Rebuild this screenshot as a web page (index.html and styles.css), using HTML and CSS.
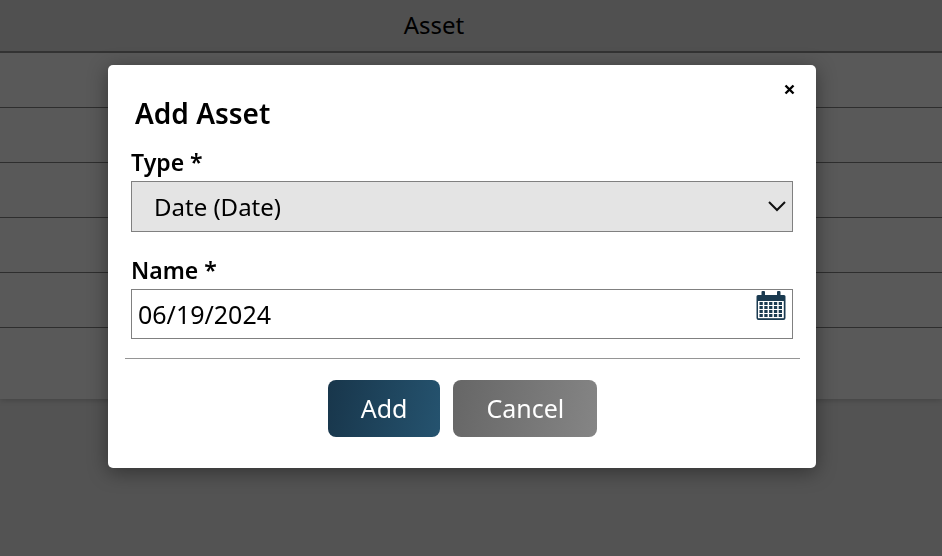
FILE: index.html
```html
<!doctype html>
<html lang="en">
<head>
    <meta charset="utf-8">
    <meta name="viewport" content="width=device-width, initial-scale=1">
    <title>Add Asset</title>
    <link rel="stylesheet" href="styles.css">
</head>
<body>
    <table class="asset-table">
        <thead>
            <tr><th>Asset</th></tr>
        </thead>
        <tbody>
            <tr><td></td></tr>
            <tr><td></td></tr>
            <tr><td></td></tr>
            <tr><td></td></tr>
            <tr><td></td></tr>
            <tr class="last-row"><td></td></tr>
        </tbody>
    </table>

    <div class="overlay">
        <form class="modal" role="dialog" aria-labelledby="modal-title">
            <button type="button" class="close" aria-label="Close">
                <svg width="11" height="11" viewBox="0 0 11 11"><path d="M1.5 1.5l8 8M9.5 1.5l-8 8" stroke="#000" stroke-width="2.4" fill="none"/></svg>
            </button>
            <h2 id="modal-title">Add Asset</h2>

            <div class="field">
                <label for="type">Type *</label>
                <div class="control">
                    <select id="type">
                        <option>Date (Date)</option>
                    </select>
                    <svg class="chevron" width="18" height="11" viewBox="0 0 18 11"><path d="M1 1l8 8 8-8" stroke="#111" stroke-width="2" fill="none"/></svg>
                </div>
            </div>

            <div class="field">
                <label for="name">Name *</label>
                <div class="control">
                    <input id="name" type="text" value="06/19/2024">
                    <button type="button" class="calendar" aria-label="Pick a date">
                        <svg width="30" height="30" viewBox="0 0 30 30">
                            <path fill="#1a3a50" d="M5.500 1q0-1 1-1H8q1 0 1 1v3h12V1q0-1 1-1h1.500q1 0 1 1v3H28q1.500 0 1.500 1.500V27q0 2-2 2h-25q-2 0-2-2V5.500Q.5 4 2 4h3.500z"/>
                            <path fill="#fff" d="M2 10h25.800v17.200H2z"/>
                            <path stroke="#1a3a50" stroke-width="3" stroke-dasharray="3.3 1.500" d="M3.500 12.500H26M3.500 16.500H26M3.500 20.500H26M3.500 24.500H26"/>
                        </svg>
                    </button>
                </div>
            </div>

            <div class="actions">
                <button type="submit" class="btn btn-add">Add</button>
                <button type="button" class="btn btn-cancel">Cancel</button>
            </div>
        </form>
    </div>
</body>
</html>
```
FILE: styles.css
```css
* {
    box-sizing: border-box;
}
body {
    margin: 0;
    min-height: 100vh;
    background-color: #535353;
    font-family: "Noto Sans", sans-serif;
    font-size: 24px;
    color: #000;
}
.asset-table {
    width: 100%;
    border-collapse: separate;
    border-spacing: 0;
    background-color: #595959;
    box-shadow: 0 1px 6px rgba(0, 0, 0, 0.2);
}
.asset-table th {
    height: 53px;
    padding: 0 74px 2px 0;
    border-bottom: 2px solid #333;
    background-color: #505050;
    font-weight: 400;
    line-height: 32px;
}
.asset-table td {
    height: 55px;
    padding: 0;
    border-bottom: 1px solid #2e2e2e;
}
.asset-table .last-row td {
    height: 71px;
    border-bottom: 0;
}
.overlay {
    position: fixed;
    inset: 0;
    padding: 65px 126px 0 108px;
}
.modal {
    position: relative;
    padding: 30px 16px 31px 17px;
    border-radius: 5px;
    background-color: #fff;
    box-shadow: 0 4px 20px rgba(0, 0, 0, 0.4);
}
.modal h2 {
    margin: 0 0 12px;
    padding: 0 10px;
    font-size: 28px;
    font-weight: 600;
    line-height: 36px;
}
.close {
    position: absolute;
    top: 16px;
    right: 18px;
    display: flex;
    padding: 3px;
    border: 0;
    background: none;
}
.field {
    padding: 0 7px 0 6px;
    margin-bottom: 19px;
}
.field label {
    display: block;
    font-size: 23px;
    font-weight: 600;
    line-height: 38px;
}
.control {
    position: relative;
}
.control select,
.control input {
    display: block;
    width: 100%;
    border: 1px solid #808080;
    border-radius: 0;
    font-family: inherit;
    color: #000;
}
.control select {
    appearance: none;
    height: 51px;
    padding: 0 40px 0 22px;
    background-color: #e4e4e4;
    font-size: 24px;
}
.control input {
    height: 50px;
    padding: 0 40px 0 6px;
    background-color: #fff;
    font-size: 25px;
}
.chevron {
    position: absolute;
    top: 20px;
    right: 7px;
    pointer-events: none;
}
.calendar {
    position: absolute;
    top: 2px;
    right: 7px;
    display: flex;
    padding: 0;
    border: 0;
    background: none;
}
.actions {
    display: flex;
    justify-content: center;
    gap: 13px;
    padding-top: 21px;
    border-top: 1px solid #959595;
}
.btn {
    padding: 0 33px;
    border: 0;
    border-radius: 8px;
    font-family: inherit;
    font-size: 25px;
    line-height: 57px;
    color: #fff;
}
.btn-add {
    background: linear-gradient(100deg, #18364b, #25536f);
}
.btn-cancel {
    background: linear-gradient(100deg, #666, #858585);
}
```
